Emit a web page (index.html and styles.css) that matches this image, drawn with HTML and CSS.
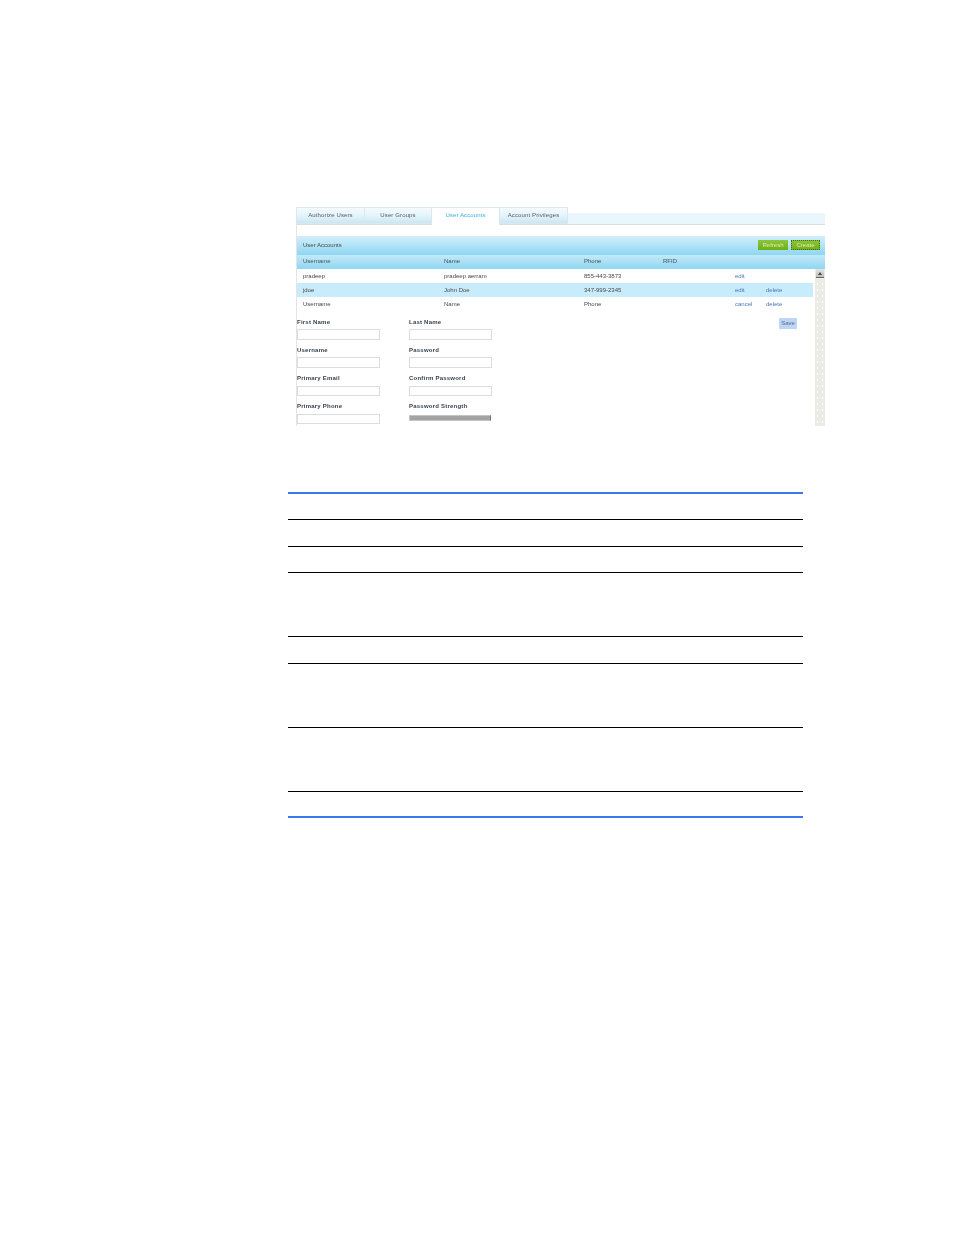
FILE: index.html
```html
<!DOCTYPE html>
<html lang="en">
<head>
<meta charset="utf-8">
<title>User Accounts</title>
<link rel="stylesheet" href="styles.css">
</head>
<body>
<main class="page">
  <section class="shot">
    <nav class="tabs">
      <span class="tab tab-1">Authorize Users</span>
      <span class="tab tab-2">User Groups</span>
      <span class="tab tab-3 active">User Accounts</span>
      <span class="tab tab-4">Account Privileges</span>
    </nav>
    <div class="inner">
      <div class="titlebar">
        <span>User Accounts</span>
        <div class="buttons">
          <span class="btn">Refresh</span>
          <span class="btn focus">Create</span>
        </div>
      </div>
      <div class="row head">
        <span>Username</span><span>Name</span><span>Phone</span><span>RFID</span>
      </div>
      <div class="body">
        <div class="content">
          <div class="row">
            <span>pradeep</span><span>pradeep aerram</span><span>855-443-3873</span><span></span><a>edit</a>
          </div>
          <div class="row selected">
            <span>jdoe</span><span>John Doe</span><span>347-999-2345</span><span></span><a>edit</a><a>delete</a>
          </div>
          <div class="row">
            <span>Username</span><span>Name</span><span>Phone</span><span></span><a>cancel</a><a>delete</a>
          </div>
          <form class="form">
            <div class="field"><label>First Name</label><span class="input"></span></div>
            <div class="field"><label>Last Name</label><span class="input"></span></div>
            <span class="save">Save</span>
            <div class="field"><label>Username</label><span class="input"></span></div>
            <div class="field"><label>Password</label><span class="input"></span></div>
            <span></span>
            <div class="field low"><label>Primary Email</label><span class="input"></span></div>
            <div class="field low"><label>Confirm Password</label><span class="input"></span></div>
            <span></span>
            <div class="field low"><label>Primary Phone</label><span class="input"></span></div>
            <div class="field meter-field"><label>Password Strength</label><span class="meter"></span></div>
          </form>
        </div>
        <div class="scrollbar"><span class="arrow"></span></div>
      </div>
    </div>
  </section>

  <section class="rules">
    <div class="rule r-26"></div>
    <div class="rule r-27"></div>
    <div class="rule r-26"></div>
    <div class="rule r-64"></div>
    <div class="rule r-27"></div>
    <div class="rule r-64"></div>
    <div class="rule r-64"></div>
    <div class="rule last"></div>
  </section>
</main>
</body>
</html>
```

FILE: styles.css
```css
* { box-sizing: border-box; }
html, body { margin: 0; padding: 0; background: #fff; }
body { font-family: "Liberation Sans", Arial, sans-serif; }
.page { width: 954px; height: 1235px; padding-top: 207px; overflow: hidden; }

.shot {
  margin-left: 296px;
  width: 529px;
  height: 219px;
  overflow: hidden;
  font-size: 6px;
  line-height: 8px;
  color: #484848;
}
.shot span, .shot a, .shot label { filter: blur(0.3px); }

.tabs {
  display: flex;
  height: 18px;
  background: linear-gradient(#fff 0 6px, #e9f6fc 6px 17px, #ddd 17px);
}
.tab {
  height: 17px;
  padding-top: 3px;
  text-align: center;
  color: #5c5c5c;
  letter-spacing: 0.12px;
  border: 1px solid #dfe5e8;
  border-left: 0;
  background: linear-gradient(#f4fafd 0, #e6f5fb 45%, #c8e8f5 100%);
}
.tab-1 { width: 69px; border-left: 1px solid #dfe5e8; }
.tab-2 { width: 67px; }
.tab-3 { width: 68px; height: 18px; background: #fff; color: #3aaede; border-bottom: 0; }
.tab-4 { width: 68px; }

.inner {
  height: 201px;
  padding-top: 11px;
  border-left: 1px solid #e4e4e4;
}
.titlebar {
  display: flex;
  justify-content: space-between;
  align-items: center;
  height: 19px;
  padding: 0 5px 1px 6px;
  color: #484848;
  background: linear-gradient(#d2effc, #8fd6f2);
}
.buttons { display: flex; gap: 3px; }
.btn {
  width: 30px;
  height: 10px;
  text-align: center;
  line-height: 10px;
  color: #d9eeb0;
  background: linear-gradient(#8cc63f, #6fae12);
}
.btn.focus { width: 29px; outline: 1px dotted #4d6b12; outline-offset: -1px; }

.row {
  display: grid;
  grid-template-columns: 141px 140px 79px 72px 31px 40px;
  align-items: center;
  height: 14px;
  padding-left: 6px;
}
.row a { color: #4a78b8; }
.head { padding-bottom: 2px; background: linear-gradient(#c3e9f8, #8fd6f2); color: #44525a; }
.selected { background: #c9ecfc; }

.body { display: flex; gap: 2px; height: 157px; }
.content { width: 516px; }

.form {
  display: grid;
  grid-template-columns: 112px 370px 18px;
  grid-auto-rows: min-content;
  row-gap: 6px;
  padding-top: 7px;
}
.field { display: flex; flex-direction: column; gap: 3px; height: 22px; }
.field.low { gap: 4px; }
.field.meter-field { gap: 5px; }
.field label { font-weight: bold; color: #36434e; line-height: 8px; letter-spacing: 0.22px; }
.input { display: block; width: 83px; height: 11px; background: #fff; border: 1px solid #dcdcdc; }
.meter { display: block; width: 82px; height: 6px; background: #a3a3a3; border: 1px solid #c4c4c4; border-right-color: #777; }
.save {
  height: 11px;
  text-align: center;
  line-height: 11px;
  color: #5a6a80;
  background: #bdd5f6;
}

.scrollbar {
  width: 10px;
  background-color: #ecece6;
  background-image: radial-gradient(circle, #fff 0.8px, transparent 1px);
  background-size: 5px 6px;
}
.arrow {
  display: block;
  width: 8px;
  height: 9px;
  margin-left: 1px;
  background: linear-gradient(#e6e6e6, #bbb);
  border-bottom: 1px solid #666;
  position: relative;
}
.arrow::after {
  content: "";
  position: absolute;
  left: 2px;
  top: 2.5px;
  border: 2px solid transparent;
  border-top: 0;
  border-bottom: 3px solid #444;
}

.rules {
  margin: 66px 0 0 288px;
  width: 515px;
  border-top: 2px solid #3b78f0;
}
.rule { border-bottom: 1px solid #000; }
.r-26 { height: 26px; }
.r-27 { height: 27px; }
.r-64 { height: 64px; }
.rule.last { height: 26px; border-bottom: 2px solid #3b78f0; }
```
